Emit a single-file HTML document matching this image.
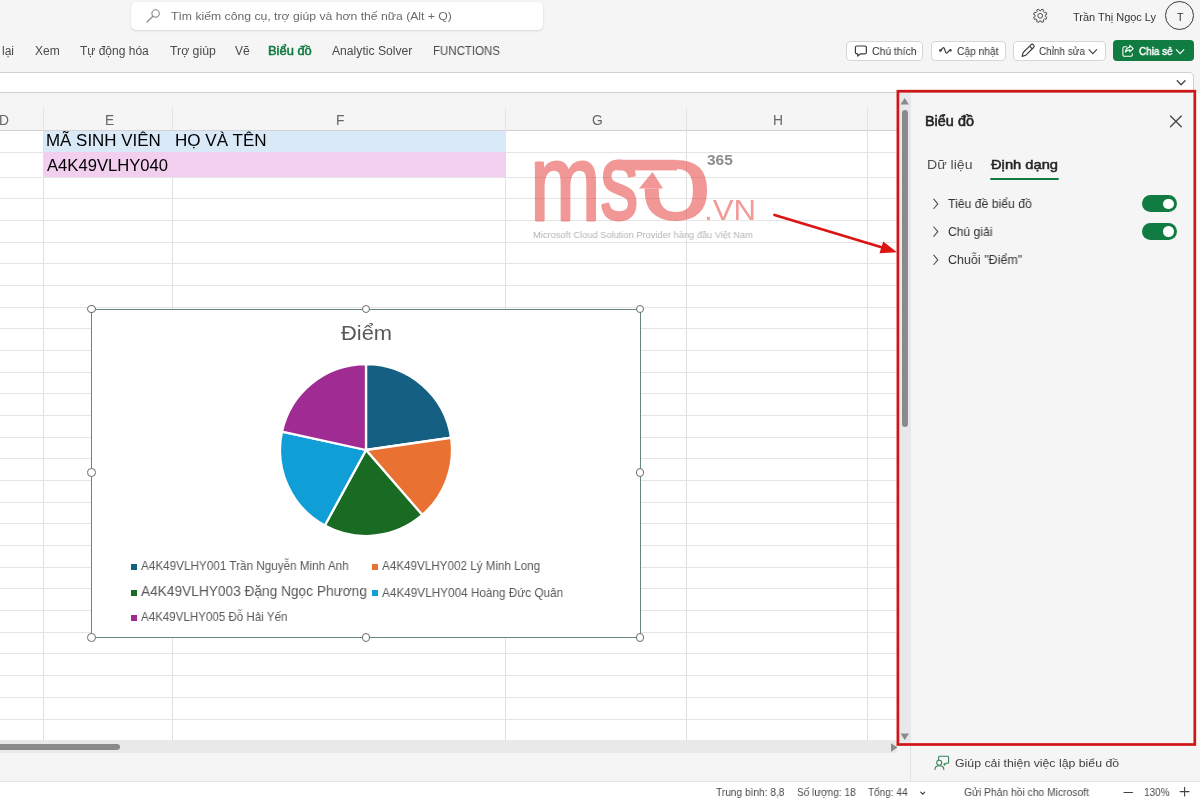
<!DOCTYPE html>
<html lang="vi"><head><meta charset="utf-8"><title>Biểu đồ - Excel</title>
<style>
*{box-sizing:border-box;margin:0;padding:0}
html,body{width:1200px;height:800px;overflow:hidden;background:#fff}
body{position:relative;font-family:"Liberation Sans",sans-serif;color:#242424}
.a{position:absolute}
.t{position:absolute;white-space:nowrap;line-height:1;transform-origin:0 50%;will-change:transform}
.btn{position:absolute;background:#fff;border:1px solid #d6d6d6;border-radius:4px}
.hl{position:absolute;left:0;width:897px;height:1px;background:#e5e5e5}
.vl{position:absolute;top:130px;width:1px;height:610px;background:#e1e1e1}
.hd{position:absolute;width:8.6px;height:8.6px;border:1.3px solid #6b6b6b;border-radius:50%;background:#fff}
svg{position:absolute;overflow:visible}
</style></head>
<body>
<header>
<div class="a" style="left:0;top:0;width:1200px;height:72px;background:#f5f5f5"></div>
<div class="a" style="left:131px;top:2px;width:412px;height:28px;background:#fff;border-radius:5px;box-shadow:0 1px 2.5px rgba(0,0,0,.12),0 0 1px rgba(0,0,0,.06)"></div>
<svg style="left:144px;top:6px" width="20" height="20" viewBox="0 0 20 20"><circle cx="11.6" cy="7.4" r="3.7" fill="none" stroke="#8a8a8a" stroke-width="1.1"/><path d="M8.9 10.2 L3 16" stroke="#8a8a8a" stroke-width="1.2" stroke-linecap="round"/></svg>
<svg style="left:0;top:0" width="1200" height="40"><path d="M1041.68 9.16 L1043.84 10.06 L1043.26 11.59 L1044.41 12.74 L1045.94 12.16 L1046.84 14.32 L1045.34 14.99 L1045.34 16.61 L1046.84 17.28 L1045.94 19.44 L1044.41 18.86 L1043.26 20.01 L1043.84 21.54 L1041.68 22.44 L1041.01 20.94 L1039.39 20.94 L1038.72 22.44 L1036.56 21.54 L1037.14 20.01 L1035.99 18.86 L1034.46 19.44 L1033.56 17.28 L1035.06 16.61 L1035.06 14.99 L1033.56 14.32 L1034.46 12.16 L1035.99 12.74 L1037.14 11.59 L1036.56 10.06 L1038.72 9.16 L1039.39 10.66 L1041.01 10.66Z" fill="none" stroke="#505050" stroke-width="1" stroke-linejoin="round"/><circle cx="1040.2" cy="15.8" r="2.4" fill="none" stroke="#505050" stroke-width="1"/></svg>
<div class="a" style="left:1165px;top:1px;width:29px;height:29px;border:1.3px solid #3a3a3a;border-radius:50%"></div>
<div class="btn" style="left:846px;top:40.5px;width:76.5px;height:20px"></div>
<div class="btn" style="left:931px;top:40.5px;width:74.5px;height:20px"></div>
<div class="btn" style="left:1013px;top:40.5px;width:92.5px;height:20px"></div>
<div class="a" style="left:1113px;top:40px;width:81px;height:21px;background:#107c41;border-radius:4px"></div>
<svg style="left:0;top:30px" width="1200" height="40" viewBox="0 30 1200 40" fill="none" stroke="#3b3b3b" stroke-width="1.1" stroke-linecap="round" stroke-linejoin="round">
<path d="M857 46h7.8a1.6 1.6 0 0 1 1.6 1.6v4.6a1.6 1.6 0 0 1-1.6 1.6h-4.2l-2.9 2.3v-2.3h-.7a1.6 1.6 0 0 1-1.6-1.6v-4.6a1.6 1.6 0 0 1 1.6-1.6z" stroke-width="1.2"/>
<path d="M940.3 50.4C941.9 50.4 942.2 47.5 943.5 47.5C945 47.5 945 53.2 946.5 53.2C947.8 53.2 948 50.3 950.3 50.3" stroke-width="1.25"/>
<circle cx="940.3" cy="50.4" r="1.25" fill="#3b3b3b" stroke="none"/><circle cx="950.4" cy="50.3" r="1.25" fill="#3b3b3b" stroke="none"/>
<path d="M1022 56.4L1023.2 52.5L1030.9 44.8A1.9 1.9 0 0 1 1033.6 47.5L1025.9 55.2Z M1029.6 46.2l2.6 2.6"/>
<path d="M1089 49.7l3.8 3.9 3.8-3.9"/>
<g stroke="#fff"><path d="M1126.6 46.8h-2.3a1.4 1.4 0 0 0-1.4 1.4v6.6a1.4 1.4 0 0 0 1.4 1.4h6.6a1.4 1.4 0 0 0 1.4-1.4v-.9"/><path d="M1129.8 45.4l3.4 3.2-3.4 3.2v-1.9c-2.2 0-3.4.7-4.4 2.2.2-2.7 1.6-4.6 4.4-4.9z"/>
<path d="M1176.3 49.7l3.8 3.9 3.8-3.9"/></g>
</svg>
<div class="a" style="left:-6px;top:72px;width:1200px;height:21px;background:#fff;border:1px solid #cfcfcf;border-radius:0 4px 4px 0"></div>
<div class="a" style="left:1194px;top:72px;width:6px;height:21px;background:#f5f5f5"></div>
<svg style="left:1170px;top:74px" width="24" height="18" viewBox="1170 74 24 18"><path d="M1177.2 80.7l3.9 4 3.9-4" fill="none" stroke="#4a4a4a" stroke-width="1.4" stroke-linecap="round" stroke-linejoin="round"/></svg>
<span class="t" style="left:171.00px;top:9.8px;font-size:11.6px;color:#6b6b6b;transform:scaleX(1.0526);">Tìm kiếm công cụ, trợ giúp và hơn thế nữa (Alt + Q)</span>
<span class="t" style="left:1072.50px;top:11.5px;font-size:10.9px;color:#333;transform:scaleX(1.0061);">Trần Thị Ngọc Ly</span>
<span class="t" style="left:1176.50px;top:11.8px;font-size:10.6px;color:#333;transform:scaleX(1.0000);">T</span>
<span class="t" style="left:2.40px;top:44.9px;font-size:12px;color:#4a4a4a;transform:scaleX(1.0000);">lại</span>
<span class="t" style="left:35.00px;top:44.9px;font-size:12px;color:#4a4a4a;transform:scaleX(1.0000);">Xem</span>
<span class="t" style="left:80.00px;top:44.9px;font-size:12px;color:#4a4a4a;transform:scaleX(1.0000);">Tự động hóa</span>
<span class="t" style="left:170.00px;top:44.9px;font-size:12px;color:#4a4a4a;transform:scaleX(1.0227);">Trợ giúp</span>
<span class="t" style="left:235.00px;top:44.9px;font-size:12px;color:#4a4a4a;transform:scaleX(1.0000);">Vẽ</span>
<span class="t" style="left:267.93px;top:44.9px;font-size:12px;color:#0f7a3f;transform:scaleX(1.0750);-webkit-text-stroke:.5px #0f7a3f;">Biểu đồ</span>
<span class="t" style="left:332.00px;top:44.9px;font-size:12px;color:#4a4a4a;transform:scaleX(1.0127);">Analytic Solver</span>
<span class="t" style="left:432.54px;top:44.9px;font-size:12px;color:#4a4a4a;transform:scaleX(0.9565);">FUNCTIONS</span>
<span class="t" style="left:871.50px;top:45.9px;font-size:10.7px;color:#333;transform:scaleX(0.9756);">Chú thích</span>
<span class="t" style="left:956.70px;top:45.9px;font-size:10.7px;color:#333;transform:scaleX(0.9558);">Cập nhật</span>
<span class="t" style="left:1038.60px;top:45.9px;font-size:10.7px;color:#333;transform:scaleX(0.9286);">Chỉnh sửa</span>
<span class="t" style="left:1138.60px;top:45.9px;font-size:10.7px;color:#fff;transform:scaleX(0.9278);-webkit-text-stroke:.45px #fff;">Chia sẻ</span>
</header>
<main>
<div class="a" style="left:0;top:93px;width:897px;height:37px;background:#f5f5f5"></div>
<div class="a" style="left:0;top:130px;width:897px;height:1px;background:#d2d2d2"></div>
<div class="a" style="left:43px;top:108px;width:1px;height:22px;background:#e4e4e4"></div>
<div class="a" style="left:172px;top:108px;width:1px;height:22px;background:#e4e4e4"></div>
<div class="a" style="left:505px;top:108px;width:1px;height:22px;background:#e4e4e4"></div>
<div class="a" style="left:686px;top:108px;width:1px;height:22px;background:#e4e4e4"></div>
<div class="a" style="left:867px;top:108px;width:1px;height:22px;background:#e4e4e4"></div>
<div class="hl" style="top:151.5px"></div>
<div class="hl" style="top:176.5px"></div>
<div class="hl" style="top:198.0px"></div>
<div class="hl" style="top:220.0px"></div>
<div class="hl" style="top:241.5px"></div>
<div class="hl" style="top:263.0px"></div>
<div class="hl" style="top:285.0px"></div>
<div class="hl" style="top:306.5px"></div>
<div class="hl" style="top:328.0px"></div>
<div class="hl" style="top:350.0px"></div>
<div class="hl" style="top:371.5px"></div>
<div class="hl" style="top:393.0px"></div>
<div class="hl" style="top:415.0px"></div>
<div class="hl" style="top:436.5px"></div>
<div class="hl" style="top:458.0px"></div>
<div class="hl" style="top:480.0px"></div>
<div class="hl" style="top:501.5px"></div>
<div class="hl" style="top:523.0px"></div>
<div class="hl" style="top:545.0px"></div>
<div class="hl" style="top:566.5px"></div>
<div class="hl" style="top:588.0px"></div>
<div class="hl" style="top:610.0px"></div>
<div class="hl" style="top:631.5px"></div>
<div class="hl" style="top:653.0px"></div>
<div class="hl" style="top:675.0px"></div>
<div class="hl" style="top:696.5px"></div>
<div class="hl" style="top:718.5px"></div>
<div class="vl" style="left:43px"></div>
<div class="vl" style="left:172px"></div>
<div class="vl" style="left:505px"></div>
<div class="vl" style="left:686px"></div>
<div class="vl" style="left:867px"></div>
<div class="a" style="left:44px;top:131px;width:461.5px;height:21px;background:#dae9f8"></div>
<div class="a" style="left:44px;top:152px;width:461.5px;height:24.5px;background:#f2ceef"></div>
<svg style="left:0;top:0" width="1200" height="800">
<defs><clipPath id="oc"><path d="M630 188.5H668.5V150H720V230H630Z"/></clipPath></defs>
<g opacity=".56" fill="#e64744" stroke="#e64744" font-family="Liberation Sans" stroke-linejoin="round">
<text transform="translate(530.2 219.7) scale(.779 1)" font-size="108.1" stroke-width="3">m</text>
<text transform="translate(600.2 218.6) scale(.708 1)" font-size="107.2" stroke-width="3">s</text>
<g clip-path="url(#oc)"><text transform="translate(640.6 218.9) scale(1.19 1)" font-size="106.8" stroke-width="2">o</text></g>
<rect x="617" y="159.8" width="60" height="10.6" stroke="none"/>
<path d="M652.5 172 L663 188.5 H639Z" stroke="none"/>
</g>
</svg>
<div class="a" style="left:91px;top:308.5px;width:549.5px;height:329.5px;background:#fff;border:1px solid #66877a"></div>
<svg style="left:0;top:0" width="1200" height="800"><g stroke="#fff" stroke-width="2.3" stroke-linejoin="round"><path d="M366 450 L366.00 364.00 A86 86 0 0 1 451.12 437.76 Z" fill="#156082"/><path d="M366 450 L451.12 437.76 A86 86 0 0 1 422.32 514.99 Z" fill="#e97132"/><path d="M366 450 L422.32 514.99 A86 86 0 0 1 324.78 525.48 Z" fill="#196b24"/><path d="M366 450 L324.78 525.48 A86 86 0 0 1 281.97 431.72 Z" fill="#0f9ed5"/><path d="M366 450 L281.97 431.72 A86 86 0 0 1 366.00 364.00 Z" fill="#a02b93"/></g></svg>
<div class="a" style="left:130.5px;top:564px;width:6px;height:6px;background:#156082"></div>
<div class="a" style="left:371.7px;top:564px;width:6px;height:6px;background:#e97132"></div>
<div class="a" style="left:130.5px;top:590.2px;width:6px;height:6px;background:#196b24"></div>
<div class="a" style="left:371.7px;top:590.2px;width:6px;height:6px;background:#0f9ed5"></div>
<div class="a" style="left:130.5px;top:615.2px;width:6px;height:6px;background:#a02b93"></div>
<div class="hd" style="left:87.2px;top:304.7px"></div>
<div class="hd" style="left:361.7px;top:304.7px"></div>
<div class="hd" style="left:635.7px;top:304.7px"></div>
<div class="hd" style="left:87.2px;top:468.2px"></div>
<div class="hd" style="left:635.7px;top:468.2px"></div>
<div class="hd" style="left:87.2px;top:633.2px"></div>
<div class="hd" style="left:361.7px;top:633.2px"></div>
<div class="hd" style="left:635.7px;top:633.2px"></div>
<span class="t" style="left:-1.50px;top:114.0px;font-size:13.8px;color:#666;transform:scaleX(1.0000);">D</span>
<span class="t" style="left:104.50px;top:114.0px;font-size:13.8px;color:#666;transform:scaleX(1.0000);">E</span>
<span class="t" style="left:336.00px;top:114.0px;font-size:13.8px;color:#666;transform:scaleX(1.0000);">F</span>
<span class="t" style="left:591.50px;top:114.0px;font-size:13.8px;color:#666;transform:scaleX(1.0000);">G</span>
<span class="t" style="left:773.00px;top:114.0px;font-size:13.8px;color:#666;transform:scaleX(1.0000);">H</span>
<span class="t" style="left:46.16px;top:132.3px;font-size:16.3px;color:#000;transform:scaleX(1.0398);">MÃ SINH VIÊN</span>
<span class="t" style="left:175.35px;top:132.3px;font-size:16.3px;color:#000;transform:scaleX(1.0482);">HỌ VÀ TÊN</span>
<span class="t" style="left:47.20px;top:157.2px;font-size:16.3px;color:#000;transform:scaleX(1.0203);">A4K49VLHY040</span>
<span class="t" style="left:703.58px;top:195.6px;font-size:29px;color:#f19a98;transform:scaleX(1.0744);">.VN</span>
<span class="t" style="left:706.80px;top:152.7px;font-size:14.6px;color:#8c8c8c;font-weight:700;transform:scaleX(1.0625);">365</span>
<span class="t" style="left:533.21px;top:230.1px;font-size:9.4px;color:#b4b4b4;transform:scaleX(0.9914);">Microsoft Cloud Solution Provider hàng đầu Việt Nam</span>
<span class="t" style="left:341.30px;top:322.6px;font-size:20.8px;color:#595959;transform:scaleX(1.0532);">Điểm</span>
<span class="t" style="left:140.80px;top:559.6px;font-size:12.6px;color:#595959;transform:scaleX(0.9300);">A4K49VLHY001 Trần Nguyễn Minh Anh</span>
<span class="t" style="left:381.80px;top:559.6px;font-size:12.6px;color:#595959;transform:scaleX(0.9259);">A4K49VLHY002 Lý Minh Long</span>
<span class="t" style="left:140.80px;top:583.3px;font-size:15px;color:#595959;transform:scaleX(0.9126);">A4K49VLHY003 Đặng Ngọc Phương</span>
<span class="t" style="left:381.80px;top:586.6px;font-size:12.6px;color:#595959;transform:scaleX(0.9337);">A4K49VLHY004 Hoàng Đức Quân</span>
<span class="t" style="left:140.80px;top:610.9px;font-size:12.6px;color:#595959;transform:scaleX(0.9182);">A4K49VLHY005 Đỗ Hải Yến</span>
</main>
<footer>
<div class="a" style="left:0;top:740px;width:897px;height:13px;background:#e9e9e9"></div>
<div class="a" style="left:-6px;top:744px;width:126px;height:6px;background:#8a8a8a;border-radius:3px"></div>
<svg style="left:880px;top:740px" width="20" height="14" viewBox="880 740 20 14"><path d="M891 743.3l6.6 4.2-6.6 4.2z" fill="#8a8a8a"/></svg>
<div class="a" style="left:0;top:753px;width:1200px;height:29px;background:#f5f5f5"></div>
<div class="a" style="left:0;top:781px;width:1200px;height:19px;background:#fff"></div>
<div class="a" style="left:0;top:781px;width:1200px;height:1px;background:#e4e4e4"></div>
<svg style="left:900px;top:782px" width="300" height="18" viewBox="900 782 300 18" fill="none" stroke="#424242" stroke-width="1.1" stroke-linecap="round">
<path d="M920.7 792.2l2 2 2-2" stroke-width="1.2"/><path d="M1124 792.5h8.6"/><path d="M1180.1 791.6h9M1184.6 787.3v8.6"/></svg>
<span class="t" style="left:716.40px;top:786.5px;font-size:11.2px;color:#4a4a4a;transform:scaleX(0.9067);">Trung bình: 8,8</span>
<span class="t" style="left:796.50px;top:786.5px;font-size:11.2px;color:#4a4a4a;transform:scaleX(0.9000);">Số lượng: 18</span>
<span class="t" style="left:868.00px;top:786.5px;font-size:11.2px;color:#4a4a4a;transform:scaleX(0.8955);">Tổng: 44</span>
<span class="t" style="left:964.00px;top:786.5px;font-size:11.2px;color:#4a4a4a;transform:scaleX(0.9213);">Gửi Phản hồi cho Microsoft</span>
<span class="t" style="left:1144.41px;top:786.5px;font-size:11.2px;color:#4a4a4a;transform:scaleX(0.8889);">130%</span>
</footer>
<aside>
<div class="a" style="left:897px;top:93px;width:303px;height:688px;background:#f5f5f5"></div>
<div class="a" style="left:899px;top:93px;width:11.5px;height:650px;background:#e8e8ea"></div>
<div class="a" style="left:910px;top:745px;width:1px;height:37px;background:#e2e2e2"></div>
<div class="a" style="left:902px;top:109.5px;width:5.7px;height:317px;background:#8a8a8c;border-radius:3px"></div>
<svg style="left:899px;top:93px" width="12" height="650" viewBox="899 93 12 650"><path d="M904.7 98l4.2 6.5h-8.4z M904.8 740l4.2-6.5h-8.4z" fill="#8a8a8c"/></svg>
<svg style="left:1165px;top:110px" width="22" height="22" viewBox="1165 110 22 22"><path d="M1170.5 116l10.8 10.8M1181.3 116l-10.8 10.8" stroke="#4a4a4a" stroke-width="1.4" stroke-linecap="round"/></svg>
<div class="a" style="left:989.5px;top:177.5px;width:69px;height:2px;background:#107c41;border-radius:1px"></div>
<div class="a" style="left:1142px;top:195.1px;width:35px;height:17.3px;background:#107c41;border-radius:9px"></div>
<div class="a" style="left:1163px;top:198.5px;width:10.6px;height:10.6px;background:#fff;border-radius:50%"></div>
<div class="a" style="left:1142px;top:223px;width:35px;height:17.3px;background:#107c41;border-radius:9px"></div>
<div class="a" style="left:1163px;top:226.4px;width:10.6px;height:10.6px;background:#fff;border-radius:50%"></div>
<svg style="left:920px;top:190px" width="30" height="90" viewBox="920 190 30 90"><path d="M933.8 199.1l4 4.7-4 4.7 M933.8 227.0l4 4.7-4 4.7 M933.8 255.1l4 4.7-4 4.7" fill="none" stroke="#4a4a4a" stroke-width="1.05" stroke-linecap="round" stroke-linejoin="round"/></svg>
<svg style="left:930px;top:752px" width="24" height="22" viewBox="930 752 24 22" fill="none" stroke="#37835a" stroke-width="1.1" stroke-linecap="round" stroke-linejoin="round">
<path d="M938.6 759.6v-2.4a1 1 0 0 1 1-1h8a1 1 0 0 1 1 1v5a1 1 0 0 1-1 1h-1.2l-2.2 1.9v-1.9"/>
<circle cx="939.2" cy="762.7" r="2.5"/><path d="M935 769.4c0-2.2 1.7-3.6 4.4-3.6s4.4 1.4 4.4 3.6"/></svg>
<span class="t" style="left:924.58px;top:114.1px;font-size:14.2px;color:#242424;transform:scaleX(1.0170);-webkit-text-stroke:.55px #242424;">Biểu đồ</span>
<span class="t" style="left:927.15px;top:157.8px;font-size:13.4px;color:#505050;transform:scaleX(1.0537);">Dữ liệu</span>
<span class="t" style="left:990.70px;top:157.8px;font-size:13.4px;color:#242424;transform:scaleX(1.0983);-webkit-text-stroke:.5px #242424;">Định dạng</span>
<span class="t" style="left:948.40px;top:198.2px;font-size:12.6px;color:#333;transform:scaleX(0.9721);">Tiêu đề biểu đồ</span>
<span class="t" style="left:948.04px;top:226.1px;font-size:12.6px;color:#333;transform:scaleX(0.9622);">Chú giải</span>
<span class="t" style="left:948.01px;top:254.2px;font-size:12.6px;color:#333;transform:scaleX(0.9932);">Chuỗi "Điểm"</span>
<span class="t" style="left:954.86px;top:758.0px;font-size:11.8px;color:#424242;transform:scaleX(1.0429);">Giúp cải thiện việc lập biểu đồ</span>
</aside>
<div class="annot">
<div class="a" style="left:1196px;top:93px;width:4px;height:652px;background:#fdfbf7"></div>
<svg style="left:0;top:0" width="1200" height="800"><rect x="897.9" y="91.2" width="296.9" height="653.3" fill="none" stroke="#d01518" stroke-width="2.7"/><path d="M774.5 215 L884 248" stroke="#dc1414" stroke-width="2.7" stroke-linecap="round"/><path d="M897 252.2 L879.5 253.3 L883.2 241.6Z" fill="#dc1414"/></svg>
</div>
</body></html>
